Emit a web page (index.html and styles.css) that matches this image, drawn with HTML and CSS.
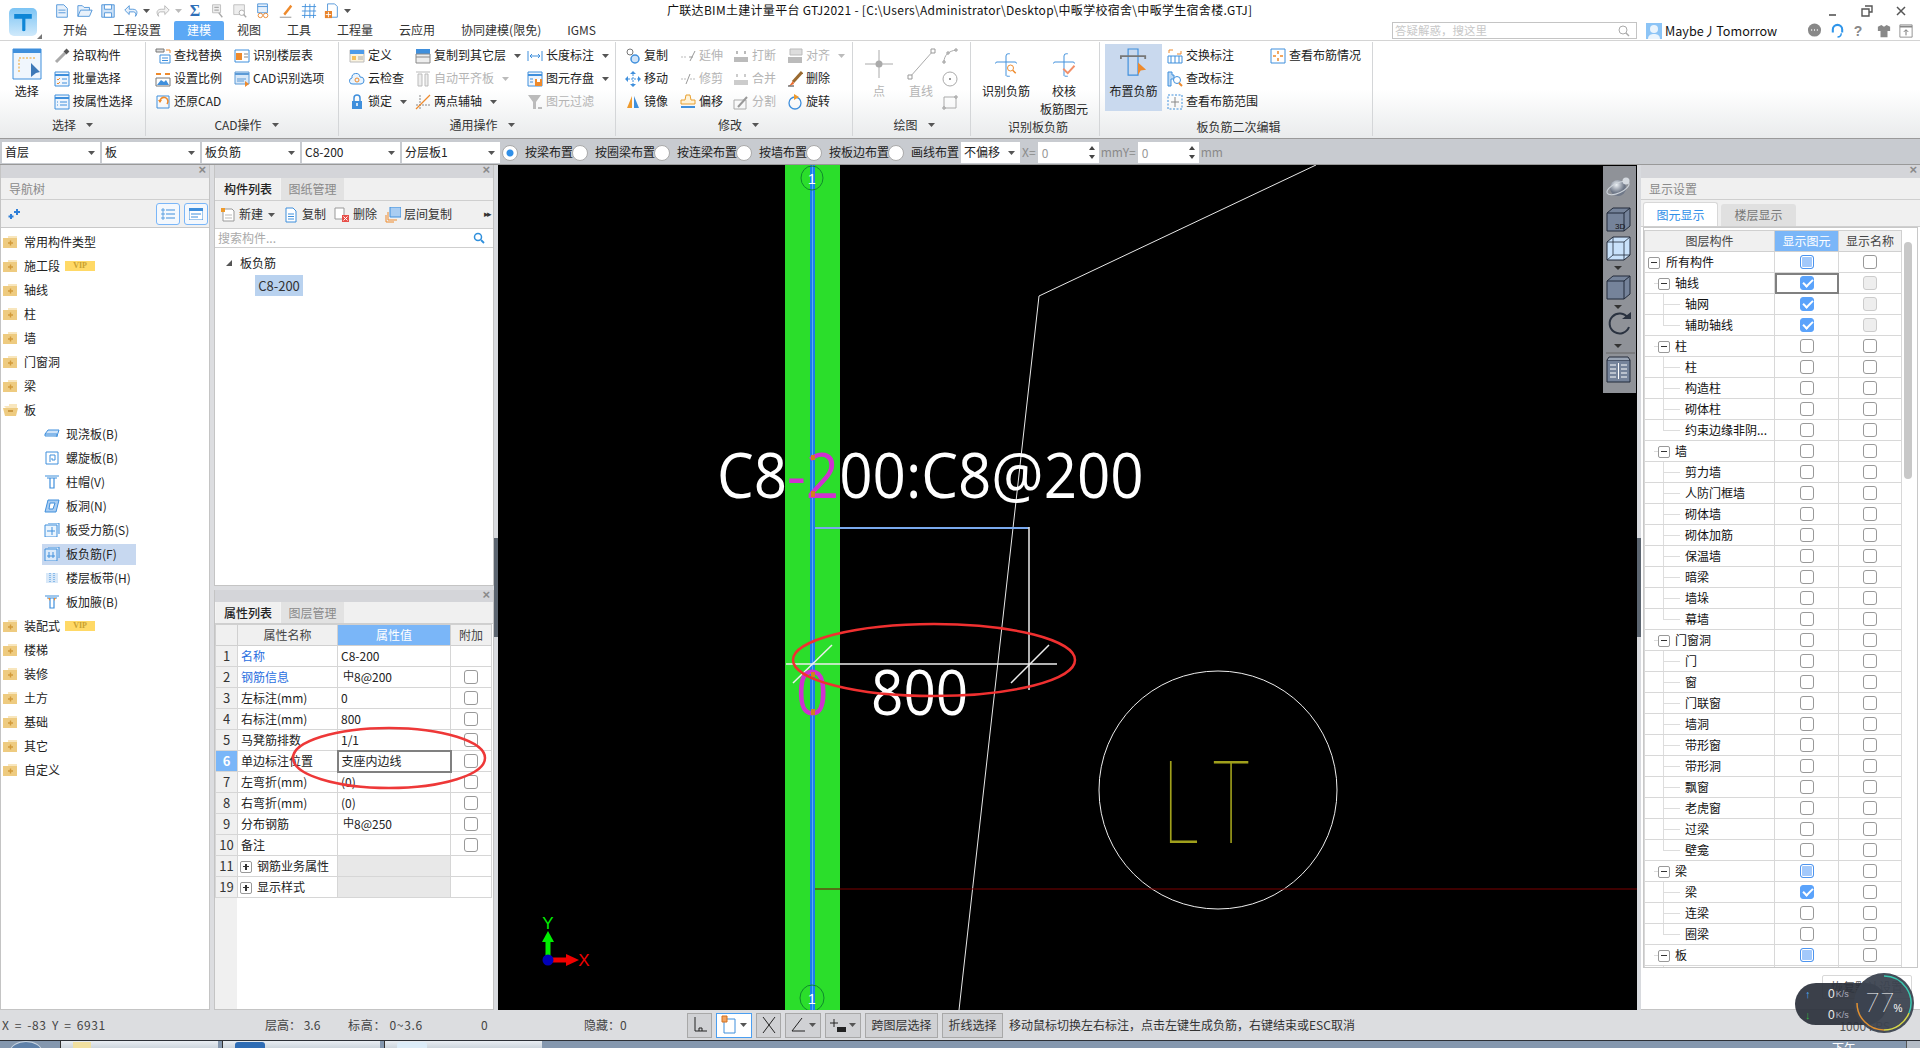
FILE: index.html
```html
<!DOCTYPE html>
<html lang="zh-CN">
<head>
<meta charset="utf-8">
<title>广联达BIM土建计量平台 GTJ2021</title>
<link rel="stylesheet" href="styles.css">
</head>
<body>
<svg class="defs" width="0" height="0">
  <symbol id="folder" viewBox="0 0 15 14"><path d="M0 3h5V1h9v12H0z" fill="#eecb80"/><path d="M5 1h9v2H5z" fill="#f8e6bd"/><path d="M7.5 5.5v5M5 8h5" stroke="#d29a3a" stroke-width="1.4"/></symbol>
  <symbol id="down" viewBox="0 0 7 4"><path d="M0 0h7L3.5 4z" fill="#555"/></symbol>
  <symbol id="ticon" viewBox="0 0 16 16"><path d="M1 1h14v14H1z" fill="#eef5fd" stroke="#3f8fdc"/><path d="M1 4h14" stroke="#3f8fdc" stroke-width="2"/></symbol>
</svg>

<header class="top">
  <div class="logo-cell">
    <div class="logo"><svg viewBox="0 0 30 30" width="24" height="24"><path d="M4 5h22v6h-8v14c0 2-4 2-4 0V11H4z" fill="#0f86d6"/></svg></div>
    <span class="logo-corner"></span>
  </div>
  <div class="top-main">
    <div class="title-row">
      <div class="quick">
        <svg class="q" viewBox="0 0 18 18"><path d="M3 2h8l4 4v10H3z" fill="#e8f1fb" stroke="#4a92d8"/><path d="M5 8h8M5 11h8" stroke="#4a92d8"/></svg>
        <svg class="q" viewBox="0 0 18 18"><path d="M1 15V3h5l2 2h6v3M1 15l3-7h13l-3 7z" fill="#e8f1fb" stroke="#4a92d8"/></svg>
        <svg class="q" viewBox="0 0 18 18"><path d="M2 2h14v14H2z" fill="#cfe3f8" stroke="#4a92d8"/><path d="M5 2h8v5H5zM5 11h8v5H5z" fill="#fff" stroke="#4a92d8"/></svg>
        <svg class="q" viewBox="0 0 18 18"><path d="M7 3L2 8l5 5v-3h5c2 0 3 2 2 5 3-4 2-8-3-8H7z" fill="#e8f1fb" stroke="#4a92d8"/></svg>
        <svg class="qd" viewBox="0 0 7 4"><use href="#down"/></svg>
        <svg class="q" viewBox="0 0 18 18"><path d="M11 3l5 5-5 5v-3H6c-2 0-3 2-2 5-3-4-2-8 3-8h4z" fill="#f2f2f2" stroke="#b5b5b5"/></svg>
        <svg class="qd off" viewBox="0 0 7 4"><path d="M0 0h7L3.5 4z" fill="#bbb"/></svg>
        <span class="sigma">Σ</span>
        <svg class="q" viewBox="0 0 18 18"><path d="M4 2h9v9H4z" fill="#eee" stroke="#bbb"/><path d="M6 5h5M6 8h5M11 11l4 5" stroke="#aaa" stroke-width="1.5"/></svg>
        <svg class="q" viewBox="0 0 18 18"><path d="M2 2h12v11H2z" fill="#eee" stroke="#bbb"/><circle cx="11" cy="11" r="3" fill="#fff" stroke="#aaa"/><path d="M13 13l3 3" stroke="#aaa" stroke-width="1.5"/></svg>
        <svg class="q" viewBox="0 0 18 18"><path d="M3 1h11v10H3z" fill="#e6f0fb" stroke="#4a92d8"/><path d="M3 4h11" stroke="#4a92d8"/><circle cx="6" cy="14" r="2.5" fill="none" stroke="#e8842c"/><circle cx="12" cy="14" r="2.5" fill="none" stroke="#e8842c"/></svg>
        <svg class="q" viewBox="0 0 18 18"><path d="M6 12L14 2l2 2-8 10z" fill="#ee8a2c"/><path d="M2 16h13" stroke="#888"/></svg>
        <svg class="q" viewBox="0 0 18 18"><path d="M1 4h16M1 9h16M1 14h16M5 1l-1 16M10 1v16M15 1l-1 16" stroke="#3f8fdc" fill="none"/></svg>
        <svg class="q" viewBox="0 0 18 18"><path d="M4 1h8l3 3v12H4z" fill="#fff" stroke="#4a92d8"/><path d="M1 9h8v8H1z" fill="#e8842c"/><path d="M5 10v6M2 13h6" stroke="#fff"/></svg>
        <svg class="qd" viewBox="0 0 7 4"><use href="#down"/></svg>
      </div>
      <div class="title">广联达BIM土建计量平台 GTJ2021 - [C:\Users\Administrator\Desktop\中畈学校宿舍\中畈学生宿舍楼.GTJ]</div>
      <div class="win">
        <svg viewBox="0 0 12 12" width="12" height="12"><path d="M2 9h7v2H2z" fill="#777"/></svg>
        <svg viewBox="0 0 12 12" width="12" height="12"><path d="M4 1h7v6H8M1 4h7v7H1z" fill="none" stroke="#555" stroke-width="1.4"/></svg>
        <svg viewBox="0 0 12 12" width="12" height="12"><path d="M2 2l8 8M10 2l-8 8" stroke="#555" stroke-width="1.5"/></svg>
      </div>
    </div>
    <div class="tab-row">
      <nav class="tabs">
        <span class="tab">开始</span><span class="tab">工程设置</span><span class="tab active">建模</span><span class="tab">视图</span><span class="tab">工具</span><span class="tab">工程量</span><span class="tab">云应用</span><span class="tab">协同建模(限免)</span><span class="tab">IGMS</span>
      </nav>
      <div class="search"><span>答疑解惑，搜这里</span><svg viewBox="0 0 12 12" width="12" height="12"><circle cx="5" cy="5" r="4" fill="none" stroke="#aaa"/><path d="M8 8l3 3" stroke="#aaa" stroke-width="1.4"/></svg></div>
      <div class="avatar"><svg viewBox="0 0 16 16" width="16" height="16"><path d="M0 0h16v16H0z" fill="#8cc4f6"/><circle cx="8" cy="6" r="4" fill="#eaf4fd"/><path d="M2 16c0-4 3-5 6-5s6 1 6 5z" fill="#eaf4fd"/></svg></div>
      <span class="user">Maybe丿Tomorrow</span>
      <div class="tools">
        <svg viewBox="0 0 16 16" width="15" height="15"><circle cx="8" cy="7.5" r="7" fill="#888"/><path d="M4.5 7.5h1M7.5 7.5h1M10.5 7.5h1" stroke="#fff" stroke-width="1.5"/></svg>
        <svg viewBox="0 0 16 16" width="15" height="15"><path d="M3 10V7a5 5 0 0 1 10 0v3" fill="none" stroke="#2f95ea" stroke-width="2.2"/><path d="M12 11c0 3-2 4-4 4" fill="none" stroke="#2f95ea" stroke-width="1.5"/></svg>
        <span class="help">?</span>
        <svg viewBox="0 0 16 16" width="14" height="14"><path d="M5 1L1 3v5h3v7h8V8h3V3l-4-2-3 2z" fill="#888"/></svg>
        <svg viewBox="0 0 16 16" width="14" height="14"><path d="M1 1h14v14H1z" fill="#fff" stroke="#888"/><path d="M1 3h14" stroke="#888" stroke-width="2"/><path d="M8 13V7M5.5 9L8 6.5 10.5 9" stroke="#666" fill="none"/></svg>
      </div>
    </div>
  </div>
</header>

<section class="ribbon">
  <div class="group g1">
    <div class="gbody">
      <div class="big b54">
        <svg class="bi" viewBox="0 0 30 32" width="30" height="32"><path d="M1 1h28v30H1z" fill="#f0f6fd" stroke="#3f8fdc"/><path d="M1 3h28" stroke="#3f8fdc" stroke-width="4"/><path d="M7 24V10h17" fill="none" stroke="#f0a020" stroke-dasharray="2 1.5"/><path d="M19 15l9 9-4 1-5 4z" fill="#3f79b8"/></svg>
        <span>选择</span>
      </div>
      <div class="col w92">
        <div class="ri"><svg class="i" viewBox="0 0 16 16"><path d="M2 14l9-9" stroke="#aaa" stroke-width="3"/><path d="M11 5l3-3" stroke="#555" stroke-width="4"/></svg>拾取构件</div>
        <div class="ri"><svg class="i" viewBox="0 0 16 16"><use href="#ticon"/><path d="M3 8l1 1 2-2M3 12l1 1 2-2" stroke="#ee8a2c" fill="none"/><path d="M8 8h5M8 12h5" stroke="#3f8fdc"/></svg>批量选择</div>
        <div class="ri"><svg class="i" viewBox="0 0 16 16"><use href="#ticon"/><path d="M6 8h7M6 11h7" stroke="#3f8fdc"/><path d="M3 8h1M3 11h1" stroke="#3f8fdc"/></svg>按属性选择</div>
      </div>
    </div>
    <div class="glabel">选择<svg class="ar" viewBox="0 0 7 4"><use href="#down"/></svg></div>
  </div>

  <div class="group g2">
    <div class="gbody">
      <div class="col w79">
        <div class="ri"><svg class="i" viewBox="0 0 16 16"><path d="M1 1h8v3H1z" fill="#ddd" stroke="#777"/><path d="M11 2h4v3" stroke="#ee8a2c" fill="none"/><path d="M5 7h10v8H5z" fill="#fff" stroke="#3f8fdc"/><path d="M7 10h6M7 12.5h6" stroke="#3f8fdc"/></svg>查找替换</div>
        <div class="ri"><svg class="i" viewBox="0 0 16 16"><path d="M1 3h5M10 3h5" stroke="#ee8a2c" stroke-width="2"/><path d="M1 7h14v8H1z" fill="#fff" stroke="#777"/><path d="M2 14l4-5 3 2 2-2 3 5z" fill="#3f8fdc"/></svg>设置比例</div>
        <div class="ri"><svg class="i" viewBox="0 0 16 16"><path d="M2 2h12v12H2z" fill="none" stroke="#3f8fdc"/><path d="M12 10a4 4 0 1 0-7-2" fill="none" stroke="#ee8a2c" stroke-width="1.6"/><path d="M3 6l2 3 2-3z" fill="#ee8a2c"/></svg>还原CAD</div>
      </div>
      <div class="col">
        <div class="ri"><svg class="i" viewBox="0 0 16 16"><path d="M1 2h14v12H1z" fill="#fff" stroke="#3f8fdc"/><path d="M2 5h6v7H2z" fill="#ee8a2c"/><path d="M10 6h4M10 9h4" stroke="#888"/></svg>识别楼层表</div>
        <div class="ri"><svg class="i" viewBox="0 0 16 16"><path d="M1 1h14v12H1z" fill="#d8e8f8" stroke="#5c9ad6"/><path d="M1 3h14" stroke="#5c9ad6" stroke-width="2"/><path d="M3 8h9M3 10h7" stroke="#5c9ad6"/><path d="M11 10l4 3-4 3z" fill="#ee8a2c"/></svg>CAD识别选项</div>
      </div>
    </div>
    <div class="glabel">CAD操作<svg class="ar" viewBox="0 0 7 4"><use href="#down"/></svg></div>
  </div>

  <div class="group g3">
    <div class="gbody">
      <div class="col w66">
        <div class="ri"><svg class="i" viewBox="0 0 16 16"><path d="M1 2h14v12H1z" fill="#fbf3df" stroke="#bbb"/><path d="M1 2h14v4H1z" fill="#4d9bea"/><path d="M3 8h4v4H3z" fill="#f4c05c"/><path d="M9 9h5M9 11h5" stroke="#aaa"/></svg>定义</div>
        <div class="ri"><svg class="i" viewBox="0 0 16 16"><path d="M4 13a3 3 0 0 1-1-6 4 4 0 0 1 8-1 3.5 3.5 0 0 1 1 7z" fill="#eaf4fd" stroke="#3f8fdc"/><circle cx="8" cy="9" r="2" fill="none" stroke="#ee8a2c"/></svg>云检查</div>
        <div class="ri"><svg class="i" viewBox="0 0 16 16"><path d="M5 7V4a3 3 0 0 1 6 0v3" fill="none" stroke="#3f8fdc" stroke-width="1.5"/><path d="M3 7h10v8H3z" fill="#3f8fdc"/><path d="M8 9v3" stroke="#fff" stroke-width="1.5"/></svg>锁定<svg class="ar" viewBox="0 0 7 4"><use href="#down"/></svg></div>
      </div>
      <div class="col w112">
        <div class="ri"><svg class="i" viewBox="0 0 16 16"><path d="M1 1h14v8H1z" fill="#3f8fdc"/><path d="M1 6h14v9H1z" fill="#eee" stroke="#888"/><path d="M1 9h14" stroke="#888"/></svg>复制到其它层<svg class="ar" viewBox="0 0 7 4"><use href="#down"/></svg></div>
        <div class="ri off"><svg class="i" viewBox="0 0 16 16"><path d="M1 1h14M3 3h4v12H3zM10 3h3v12h-3z" fill="#eee" stroke="#bbb"/></svg>自动平齐板<svg class="ar" viewBox="0 0 7 4"><path d="M0 0h7L3.5 4z" fill="#bbb"/></svg></div>
        <div class="ri"><svg class="i" viewBox="0 0 16 16"><path d="M5 1v14M1 11h14" stroke="#888" stroke-dasharray="2 1"/><path d="M1 15L15 1" stroke="#ee8a2c" stroke-width="1.2"/></svg>两点辅轴<svg class="ar" viewBox="0 0 7 4"><use href="#down"/></svg></div>
      </div>
      <div class="col">
        <div class="ri"><svg class="i" viewBox="0 0 16 16"><path d="M1 3v10M15 3v10M3 8h10M3 8l2-2M3 8l2 2M13 8l-2-2M13 8l-2 2" stroke="#3f8fdc" fill="none"/></svg>长度标注<svg class="ar" viewBox="0 0 7 4"><use href="#down"/></svg></div>
        <div class="ri"><svg class="i" viewBox="0 0 16 16"><use href="#ticon"/><path d="M8 8h7v7H8z" fill="#ee8a2c"/><path d="M10 8h3v3h-3z" fill="#fff"/><path d="M3 8h3M3 11h3" stroke="#3f8fdc"/></svg>图元存盘<svg class="ar" viewBox="0 0 7 4"><use href="#down"/></svg></div>
        <div class="ri off"><svg class="i" viewBox="0 0 16 16"><path d="M1 1h13L9 8v7H6V8z" fill="#bbb"/><path d="M11 14h4" stroke="#bbb" stroke-width="2"/></svg>图元过滤</div>
      </div>
    </div>
    <div class="glabel">通用操作<svg class="ar" viewBox="0 0 7 4"><use href="#down"/></svg></div>
  </div>

  <div class="group g4">
    <div class="gbody">
      <div class="col w55">
        <div class="ri"><svg class="i" viewBox="0 0 16 16"><circle cx="5" cy="4" r="3" fill="#fff" stroke="#777"/><circle cx="10" cy="11" r="4" fill="#cfe3f8" stroke="#3f8fdc" stroke-width="1.5"/></svg>复制</div>
        <div class="ri"><svg class="i" viewBox="0 0 16 16"><path d="M8 0l3 3H5zM8 16l3-3H5zM0 8l3 3V5zM16 8l-3 3V5z" fill="#3f8fdc"/><path d="M8 3v10M3 8h10" stroke="#3f8fdc" stroke-dasharray="2 1"/></svg>移动</div>
        <div class="ri"><svg class="i" viewBox="0 0 16 16"><path d="M7 2L2 14h5z" fill="#ee9a2c"/><path d="M9 2l5 12H9z" fill="#3f8fdc"/></svg>镜像</div>
      </div>
      <div class="col w53">
        <div class="ri off"><svg class="i" viewBox="0 0 16 16"><path d="M1 9h6" stroke="#bbb" stroke-dasharray="2 1"/><path d="M9 9h4M10 13l5-10" stroke="#999"/></svg>延伸</div>
        <div class="ri off"><svg class="i" viewBox="0 0 16 16"><path d="M1 8h5M10 8h5" stroke="#bbb" stroke-dasharray="2 1"/><path d="M6 13l4-10" stroke="#999"/></svg>修剪</div>
        <div class="ri"><svg class="i" viewBox="0 0 16 16"><path d="M6 1h4l1 5h4v4H1V6h4z" fill="#fff3d8" stroke="#e8a030"/><path d="M1 13h14" stroke="#3f8fdc" stroke-width="2"/></svg>偏移</div>
      </div>
      <div class="col w54">
        <div class="ri off"><svg class="i" viewBox="0 0 16 16"><path d="M1 9h14v5H1zM3 3h2v3H3zM11 3h2v3h-2z" fill="#bbb"/></svg>打断</div>
        <div class="ri off"><svg class="i" viewBox="0 0 16 16"><path d="M1 9h14v5H1zM3 3h2v3H3zM11 3h2v3h-2z" fill="#ccc"/></svg>合并</div>
        <div class="ri off"><svg class="i" viewBox="0 0 16 16"><path d="M1 6h12v9H1z" fill="none" stroke="#aaa"/><path d="M5 13L14 3" stroke="#999" stroke-width="2"/></svg>分割</div>
      </div>
      <div class="col">
        <div class="ri off"><svg class="i" viewBox="0 0 16 16"><path d="M3 1h12v6H3z" fill="#ddd" stroke="#bbb"/><path d="M1 9h14v6H1z" fill="#bbb"/></svg>对齐<svg class="ar" viewBox="0 0 7 4"><path d="M0 0h7L3.5 4z" fill="#bbb"/></svg></div>
        <div class="ri"><svg class="i" viewBox="0 0 16 16"><path d="M15 1L6 11" stroke="#9a6a30" stroke-width="3"/><path d="M6 10l-4 5 5-2z" fill="#ee6a2c"/><path d="M1 15h6" stroke="#333"/></svg>删除</div>
        <div class="ri"><svg class="i" viewBox="0 0 16 16"><circle cx="8" cy="9" r="6" fill="none" stroke="#3f8fdc" stroke-width="1.3"/><path d="M7 0l5 3-5 3z" fill="#ee9a2c"/></svg>旋转</div>
      </div>
    </div>
    <div class="glabel">修改<svg class="ar" viewBox="0 0 7 4"><use href="#down"/></svg></div>
  </div>

  <div class="group g5">
    <div class="gbody">
      <div class="big b42 off">
        <svg class="bi" viewBox="0 0 30 32" width="30" height="32"><path d="M15 2v28M1 16h28" stroke="#aaa"/><circle cx="15" cy="16" r="3.5" fill="#aaa"/></svg>
        <span>点</span>
      </div>
      <div class="big b42 off">
        <svg class="bi" viewBox="0 0 30 32" width="30" height="32"><path d="M4 29L27 3" stroke="#aaa"/><path d="M2 27h4v4H2zM25 1h4v4h-4z" fill="#fff" stroke="#999"/></svg>
        <span>直线</span>
      </div>
      <div class="col">
        <div class="ri"><svg class="i" viewBox="0 0 16 16"><path d="M2 14C2 7 7 3 14 2" fill="none" stroke="#aaa"/><path d="M1 13h2v2H1zM13 1h2v2h-2zM5 4h2v2H5z" fill="#fff" stroke="#999"/></svg></div>
        <div class="ri"><svg class="i" viewBox="0 0 16 16"><circle cx="8" cy="8" r="7" fill="none" stroke="#aaa"/><path d="M7 7h2v2H7z" fill="#999"/></svg></div>
        <div class="ri"><svg class="i" viewBox="0 0 16 16"><path d="M2 3h12v11H2z" fill="none" stroke="#aaa"/><path d="M13 2h2v2h-2zM1 13h2v2H1z" fill="#fff" stroke="#999"/></svg></div>
      </div>
    </div>
    <div class="glabel">绘图<svg class="ar" viewBox="0 0 7 4"><use href="#down"/></svg></div>
  </div>

  <div class="group g6">
    <div class="gbody">
      <div class="big b58">
        <svg class="bi" viewBox="0 0 30 32" width="30" height="32"><path d="M15 8V4q0-3 3-3h2M15 8v22q0 1 3 1h2M1 14q0-2 2-2h24q2 0 2 2" fill="none" stroke="#3f8fdc" stroke-width="1.3"/><circle cx="21" cy="20" r="4" fill="#fff" stroke="#ee8a2c" stroke-width="1.3"/><path d="M24 23l4 4" stroke="#ee8a2c" stroke-width="2"/></svg>
        <span>识别负筋</span>
      </div>
      <div class="big b58">
        <svg class="bi" viewBox="0 0 30 32" width="30" height="32"><path d="M15 8V4q0-3 3-3h2M15 8v22q0 1 3 1h2M1 14q0-2 2-2h24q2 0 2 2" fill="none" stroke="#3f8fdc" stroke-width="1.3"/><path d="M14 21l6 6 9-10" fill="none" stroke="#f2906a" stroke-width="2.5"/></svg>
        <span>校核<br>板筋图元</span>
      </div>
    </div>
    <div class="glabel low">识别板负筋</div>
  </div>

  <div class="group g7">
    <div class="gbody">
      <div class="big active">
        <svg class="bi" viewBox="0 0 30 32" width="30" height="32"><path d="M9 1h11v29H9z" fill="none" stroke="#3f8fdc" stroke-width="1.3"/><path d="M1 12v-3h27v3" fill="none" stroke="#777" stroke-width="2"/><path d="M20 16l9 8-6 1-3 5z" fill="#ee8a2c"/></svg>
        <span>布置负筋</span>
      </div>
      <div class="col w103">
        <div class="ri"><svg class="i" viewBox="0 0 16 16"><path d="M1 8h14v7H1z" fill="#fff" stroke="#3f8fdc"/><path d="M4 8v7M8 8v7M12 8v7" stroke="#3f8fdc"/><path d="M2 5V2h4M14 3v3h-4" stroke="#ee8a2c" fill="none"/></svg>交换标注</div>
        <div class="ri"><svg class="i" viewBox="0 0 16 16"><path d="M1 1h4v3h2v4H4v7H1z" fill="#bcd9f5" stroke="#3f8fdc"/><circle cx="10" cy="9" r="3.5" fill="#fff" stroke="#3f8fdc"/><path d="M12 12l3 3" stroke="#ee8a2c" stroke-width="2"/></svg>查改标注</div>
        <div class="ri"><svg class="i" viewBox="0 0 16 16"><path d="M1 1h14v14H1z" fill="none" stroke="#3f8fdc" stroke-dasharray="2 1.5"/><path d="M8 3v10M4 8h8" stroke="#888"/></svg>查看布筋范围</div>
      </div>
      <div class="col">
        <div class="ri"><svg class="i" viewBox="0 0 16 16"><path d="M1 1h14v14H1z" fill="#fff" stroke="#3f8fdc"/><path d="M8 3v3M8 10v3M3 8h3M10 8h3" stroke="#ee8a2c" stroke-width="1.5"/></svg>查看布筋情况</div>
      </div>
    </div>
    <div class="glabel low">板负筋二次编辑</div>
  </div>
</section>

<section class="optbar">
  <div class="sel w98">首层<svg class="ar" viewBox="0 0 7 4"><use href="#down"/></svg></div>
  <div class="sel w98">板<svg class="ar" viewBox="0 0 7 4"><use href="#down"/></svg></div>
  <div class="sel w98">板负筋<svg class="ar" viewBox="0 0 7 4"><use href="#down"/></svg></div>
  <div class="sel w98">C8-200<svg class="ar" viewBox="0 0 7 4"><use href="#down"/></svg></div>
  <div class="sel w98">分层板1<svg class="ar" viewBox="0 0 7 4"><use href="#down"/></svg></div>
  <label class="radio on first">按梁布置</label>
  <label class="radio">按圈梁布置</label>
  <label class="radio">按连梁布置</label>
  <label class="radio">按墙布置</label>
  <label class="radio">按板边布置</label>
  <label class="radio">画线布置</label>
  <div class="sel w59">不偏移<svg class="ar" viewBox="0 0 7 4"><use href="#down"/></svg></div>
  <span class="dim">X=</span>
  <div class="spin">0<span class="spin-a"><i></i><i></i></span></div>
  <span class="dim">mmY=</span>
  <div class="spin">0<span class="spin-a"><i></i><i></i></span></div>
  <span class="dim">mm</span>
</section>

<main class="main">
  <aside class="panel nav">
    <div class="strip"><span class="x">×</span></div>
    <div class="ptitle">导航树</div>
    <div class="navtools">
      <svg class="spark" viewBox="0 0 14 12" width="14" height="12"><path d="M3 6v5M0.5 8.5h5M9 1v6M6 4h6" stroke="#2f7fd8" stroke-width="2"/></svg>
      <span class="nbtn"><svg viewBox="0 0 14 12" width="14" height="12"><path d="M1 1h2v2H1zM1 5h2v2H1zM1 9h2v2H1z" fill="none" stroke="#3f8fdc" stroke-width=".8"/><path d="M5 2h9M5 6h9M5 10h9" stroke="#3f8fdc"/></svg></span>
      <span class="nbtn"><svg viewBox="0 0 14 12" width="14" height="12"><path d="M0 0h14v12H0z" fill="#fff" stroke="#3f8fdc"/><path d="M0 0h14v3H0z" fill="#3f8fdc"/><path d="M2 6h10M2 9h7" stroke="#3f8fdc"/></svg></span>
    </div>
    <ul class="tree">
      <li><svg class="fd"><use href="#folder"/></svg>常用构件类型</li>
      <li><svg class="fd"><use href="#folder"/></svg>施工段<span class="vip">VIP</span></li>
      <li><svg class="fd"><use href="#folder"/></svg>轴线</li>
      <li><svg class="fd"><use href="#folder"/></svg>柱</li>
      <li><svg class="fd"><use href="#folder"/></svg>墙</li>
      <li><svg class="fd"><use href="#folder"/></svg>门窗洞</li>
      <li><svg class="fd"><use href="#folder"/></svg>梁</li>
      <li><svg class="fd" viewBox="0 0 15 14"><path d="M1 3h5V1h8v4H3z" fill="#f8e6bd"/><path d="M0 5h15l-2 8H2z" fill="#eecb80"/><path d="M5 8h5" stroke="#c08a30" stroke-width="1.5"/></svg>板</li>
      <li class="sub"><svg class="ci" viewBox="0 0 16 14"><path d="M1 7l3-4h11l-2 6H1zM1 7h12v3" fill="#cfe3f8" stroke="#3f8fdc"/></svg>现浇板(B)</li>
      <li class="sub"><svg class="ci" viewBox="0 0 16 14"><path d="M2 1h12v12H2z" fill="none" stroke="#3f8fdc"/><path d="M6 11V4h5v5H8V7" fill="none" stroke="#3f8fdc"/></svg>螺旋板(B)</li>
      <li class="sub"><svg class="ci" viewBox="0 0 16 14"><path d="M1 1h14M3 3h10M6 3v10h4V3" fill="none" stroke="#3f8fdc" stroke-width="1.2"/></svg>柱帽(V)</li>
      <li class="sub"><svg class="ci" viewBox="0 0 16 14"><path d="M4 1h11l-3 12H1z" fill="#a9cdf2" stroke="#3f8fdc"/><path d="M6 4h5l-2 6H5z" fill="#fff" stroke="#3f8fdc"/></svg>板洞(N)</li>
      <li class="sub"><svg class="ci" viewBox="0 0 16 14"><path d="M1 2h12v12H1zM4 0h11v11" fill="#eaf4fd" stroke="#3f8fdc"/><path d="M3 8h8M8 4v8" stroke="#3f8fdc"/></svg>板受力筋(S)</li>
      <li class="sub sel-row"><svg class="ci" viewBox="0 0 16 14"><path d="M1 2h12v12H1zM4 0h11v11" fill="#dbeafa" stroke="#3f8fdc"/><path d="M3 9h8M5 5v6M9 5v6" stroke="#3f8fdc"/></svg>板负筋(F)</li>
      <li class="sub"><svg class="ci" viewBox="0 0 16 14"><path d="M2 2h12v10H2z" fill="#d8e8f8"/><path d="M6 2v10M10 2v10" stroke="#3f8fdc" stroke-dasharray="1 1"/></svg>楼层板带(H)</li>
      <li class="sub"><svg class="ci" viewBox="0 0 16 14"><path d="M1 1h14M3 3h10M6 3v10h4V3" fill="none" stroke="#3f8fdc" stroke-width="1.2"/><path d="M4 3l2 3V3zM12 3l-2 3V3z" fill="#ee8a2c"/></svg>板加腋(B)</li>
      <li><svg class="fd"><use href="#folder"/></svg>装配式<span class="vip">VIP</span></li>
      <li><svg class="fd"><use href="#folder"/></svg>楼梯</li>
      <li><svg class="fd"><use href="#folder"/></svg>装修</li>
      <li><svg class="fd"><use href="#folder"/></svg>土方</li>
      <li><svg class="fd"><use href="#folder"/></svg>基础</li>
      <li><svg class="fd"><use href="#folder"/></svg>其它</li>
      <li><svg class="fd"><use href="#folder"/></svg>自定义</li>
    </ul>
  </aside>

  <div class="mid">
    <section class="panel comp">
      <div class="strip"><span class="x">×</span></div>
      <div class="ptabs"><span class="ptab on">构件列表</span><span class="ptab">图纸管理</span></div>
      <div class="ctools">
        <span class="ct"><svg class="i" viewBox="0 0 16 16"><path d="M3 2h9l2 2v10H3z" fill="#fff" stroke="#999"/><path d="M1 1h4v4H1z" fill="#ee9a2c"/><path d="M5 8h7M5 11h7" stroke="#bbb"/></svg>新建<svg class="ar" viewBox="0 0 7 4"><use href="#down"/></svg></span>
        <span class="ct"><svg class="i" viewBox="0 0 16 16"><path d="M3 1h7l3 3v11H3z" fill="#fff" stroke="#3f8fdc"/><path d="M5 7h6M5 9.5h6M5 12h6" stroke="#3f8fdc"/></svg>复制</span>
        <span class="ct"><svg class="i" viewBox="0 0 16 16"><path d="M1 1h9v11H1z" fill="#fff" stroke="#999"/><path d="M8 8h7v7H8z" fill="#e8504a"/><path d="M9.5 9.5l4 4M13.5 9.5l-4 4" stroke="#fff"/></svg>删除</span>
        <span class="ct"><svg class="i" viewBox="0 0 16 16"><path d="M5 0h11v10H5z" fill="#a9cdf2" stroke="#3f8fdc"/><path d="M3 5v8h9M1 8v7h8" fill="none" stroke="#ee8a2c"/></svg>层间复制</span>
        <span class="more">▸▸</span>
      </div>
      <div class="csearch"><span>搜索构件...</span><svg viewBox="0 0 12 12" width="12" height="12"><circle cx="5" cy="5" r="3.5" fill="none" stroke="#2f8fdc" stroke-width="1.5"/><path d="M8 8l3 3" stroke="#2f8fdc" stroke-width="1.8"/></svg></div>
      <div class="ctree">
        <div class="cnode"><i class="tri"></i>板负筋</div>
        <div class="cleaf">C8-200</div>
      </div>
    </section>

    <section class="panel props">
      <div class="strip"><span class="x">×</span></div>
      <div class="ptabs"><span class="ptab on">属性列表</span><span class="ptab">图层管理</span></div>
      <div class="ptable-wrap">
        <table class="ptable">
          <colgroup><col class="c-no"><col class="c-name"><col class="c-val"><col class="c-add"></colgroup>
          <thead><tr><th></th><th>属性名称</th><th class="hl">属性值</th><th>附加</th></tr></thead>
          <tbody>
            <tr><td class="no">1</td><td class="link">名称</td><td>C8-200</td><td></td></tr>
            <tr><td class="no">2</td><td class="link">钢筋信息</td><td><small>中</small>8@200</td><td class="ck"><i class="cb"></i></td></tr>
            <tr><td class="no">3</td><td>左标注(mm)</td><td>0</td><td class="ck"><i class="cb"></i></td></tr>
            <tr><td class="no">4</td><td>右标注(mm)</td><td>800</td><td class="ck"><i class="cb"></i></td></tr>
            <tr><td class="no">5</td><td>马凳筋排数</td><td>1/1</td><td class="ck"><i class="cb"></i></td></tr>
            <tr><td class="no act">6</td><td>单边标注位置</td><td class="edit">支座内边线</td><td class="ck"><i class="cb"></i></td></tr>
            <tr><td class="no">7</td><td>左弯折(mm)</td><td>(0)</td><td class="ck"><i class="cb"></i></td></tr>
            <tr><td class="no">8</td><td>右弯折(mm)</td><td>(0)</td><td class="ck"><i class="cb"></i></td></tr>
            <tr><td class="no">9</td><td>分布钢筋</td><td><small>中</small>8@250</td><td class="ck"><i class="cb"></i></td></tr>
            <tr><td class="no">10</td><td>备注</td><td></td><td class="ck"><i class="cb"></i></td></tr>
            <tr><td class="no">11</td><td><i class="plus"></i>钢筋业务属性</td><td class="grey"></td><td></td></tr>
            <tr><td class="no">19</td><td><i class="plus"></i>显示样式</td><td class="grey"></td><td></td></tr>
          </tbody>
        </table>
        <svg class="mark" viewBox="0 0 200 66" width="200" height="66"><ellipse cx="100" cy="33" rx="96" ry="30" fill="none" stroke="#ee3838" stroke-width="2.5"/></svg>
      </div>
    </section>
  </div>

  <div class="split"></div>

  <section class="canvas">
    <svg class="cad" viewBox="498 165 1139 845" width="1139" height="845">
      <rect x="785" y="165" width="55" height="845" fill="#2bde2b"/>
      <path d="M959 1010L1039 296L1316 165" fill="none" stroke="#e8e8e8"/>
      <rect x="810" y="165" width="5" height="845" fill="#1a7fe8"/>
      <rect x="812" y="165" width="1" height="845" fill="#58a8f8"/>
      <ellipse cx="812" cy="178" rx="11" ry="12" fill="none" stroke="#0e8a2c"/>
      <text class="axis-no" x="812" y="184">1</text>
      <ellipse cx="812" cy="998" rx="12" ry="13" fill="none" stroke="#0e8a2c"/>
      <text class="axis-no" x="812" y="1004">1</text>
      <text class="big-t" transform="translate(717 498) scale(.926 1)">C8<tspan fill="#d030d0">-2</tspan>00:C8@200</text>
      <rect x="811" y="455" width="4" height="5" fill="#d08020"/><rect x="811" y="491" width="4" height="6" fill="#d08020"/>
      <path d="M815 528H1029" stroke="#7aa9ee" stroke-width="2"/>
      <path d="M1029 527V690" stroke="#ddd" stroke-width="1.6"/>
      <path d="M786 664H1057" stroke="#eee" stroke-width="1.5"/>
      <path d="M793 683L832 645M1011 683L1049 645" stroke="#eee" stroke-width="1.5"/>
      <text class="big-t" transform="translate(871 715) scale(.9 1)">800</text>
      <text class="big-t mag" transform="translate(796 715) scale(.9 1)">0</text>
      <rect x="811" y="672" width="4" height="5" fill="#d08020"/><rect x="811" y="709" width="4" height="6" fill="#d08020"/>
      <ellipse cx="934" cy="660" rx="141" ry="36" fill="none" stroke="#f03030" stroke-width="2.5"/>
      <circle cx="1218" cy="790" r="119" fill="none" stroke="#eee"/>
      <text class="lt" transform="translate(1162 843) scale(.62 1)">LT</text>
      <path d="M815 889H1637" stroke="#7a0000"/>
      <path d="M548 960V940" stroke="#00ee00" stroke-width="5"/><path d="M548 931l6 11h-12z" fill="#00ee00"/>
      <path d="M548 960H568" stroke="#f00000" stroke-width="5"/><path d="M579 960l-13-6v12z" fill="#f00000"/>
      <circle cx="548" cy="960" r="5.5" fill="#0000b8"/>
      <text class="ax g" x="548" y="929">Y</text><text class="ax r" x="584" y="966">X</text>
    </svg>
    <div class="viewbar">
      <svg viewBox="0 0 33 227" width="33" height="227">
        <defs><radialGradient id="sph" cx=".4" cy=".3"><stop offset="0" stop-color="#eef2f6"/><stop offset="1" stop-color="#6f7888"/></radialGradient></defs>
        <circle cx="15" cy="22" r="8" fill="url(#sph)"/><ellipse cx="15" cy="22" rx="12" ry="5" fill="none" stroke="#cfd5dc" transform="rotate(-25 15 22)"/><circle cx="23" cy="15" r="3.5" fill="#d5dae0"/>
        <path d="M4 47l6-5h17v18l-6 5H4z" fill="#75839a" stroke="#222b3a"/><path d="M4 47h17v18M21 47l6-5" fill="none" stroke="#222b3a"/><text class="vb3" x="12" y="63">3D</text>
        <path d="M4 76l6-5h17v18l-6 5H4z" fill="#c9e2fb" stroke="#222b3a"/><path d="M4 76h17v18M21 76l6-5M10 71v18h17M10 89l-6 5" fill="none" stroke="#222b3a" stroke-width=".8"/>
        <path d="M11 100h8l-4 4z" fill="#333"/>
        <path d="M4 115l6-5h17v18l-6 5H4z" fill="#75839a" stroke="#222b3a"/><path d="M4 115h17v18M21 115l6-5" fill="none" stroke="#222b3a"/>
        <path d="M11 139h8l-4 4z" fill="#333"/>
        <path d="M25 152a10 10 0 1 0 1 9" fill="none" stroke="#2a3240" stroke-width="2"/><path d="M19 153h9v-7z" fill="#2a3240"/>
        <path d="M11 178h8l-4 4z" fill="#333"/><path d="M3 187h29" stroke="#666"/>
        <path d="M4 194h23v22H4z" fill="#75839a" stroke="#222b3a"/><path d="M4 194l2-3h19l2 3" fill="#9aa5b5" stroke="#222b3a"/><path d="M7 199h6M7 203h6M7 207h6M7 211h6M18 199h6M18 203h6M18 207h6M18 211h6M15.5 197v16" stroke="#fff"/>
      </svg>
    </div>
  </section>

  <div class="split"></div>

  <aside class="panel right">
    <div class="strip"><span class="x">×</span></div>
    <div class="ptitle">显示设置</div>
    <div class="rtabs"><span class="rtab on">图元显示</span><span class="rtab">楼层显示</span></div>
    <div class="rbox">
      <table class="rtable">
        <colgroup><col class="r-name"><col class="r-a"><col class="r-b"></colgroup>
        <thead><tr><th>图层构件</th><th class="hl">显示图元</th><th>显示名称</th></tr></thead>
        <tbody>
          <tr><td class="n l0"><i class="mb"></i>所有构件</td><td><i class="cb pt"></i></td><td><i class="cb"></i></td></tr>
          <tr><td class="n l1"><i class="mb"></i>轴线</td><td class="cur"><i class="cb ok"></i></td><td><i class="cb dis"></i></td></tr>
          <tr><td class="n l2">轴网</td><td><i class="cb ok"></i></td><td><i class="cb dis"></i></td></tr>
          <tr><td class="n l2 e">辅助轴线</td><td><i class="cb ok"></i></td><td><i class="cb dis"></i></td></tr>
          <tr><td class="n l1"><i class="mb"></i>柱</td><td><i class="cb"></i></td><td><i class="cb"></i></td></tr>
          <tr><td class="n l2">柱</td><td><i class="cb"></i></td><td><i class="cb"></i></td></tr>
          <tr><td class="n l2">构造柱</td><td><i class="cb"></i></td><td><i class="cb"></i></td></tr>
          <tr><td class="n l2">砌体柱</td><td><i class="cb"></i></td><td><i class="cb"></i></td></tr>
          <tr><td class="n l2 e">约束边缘非阴...</td><td><i class="cb"></i></td><td><i class="cb"></i></td></tr>
          <tr><td class="n l1"><i class="mb"></i>墙</td><td><i class="cb"></i></td><td><i class="cb"></i></td></tr>
          <tr><td class="n l2">剪力墙</td><td><i class="cb"></i></td><td><i class="cb"></i></td></tr>
          <tr><td class="n l2">人防门框墙</td><td><i class="cb"></i></td><td><i class="cb"></i></td></tr>
          <tr><td class="n l2">砌体墙</td><td><i class="cb"></i></td><td><i class="cb"></i></td></tr>
          <tr><td class="n l2">砌体加筋</td><td><i class="cb"></i></td><td><i class="cb"></i></td></tr>
          <tr><td class="n l2">保温墙</td><td><i class="cb"></i></td><td><i class="cb"></i></td></tr>
          <tr><td class="n l2">暗梁</td><td><i class="cb"></i></td><td><i class="cb"></i></td></tr>
          <tr><td class="n l2">墙垛</td><td><i class="cb"></i></td><td><i class="cb"></i></td></tr>
          <tr><td class="n l2 e">幕墙</td><td><i class="cb"></i></td><td><i class="cb"></i></td></tr>
          <tr><td class="n l1"><i class="mb"></i>门窗洞</td><td><i class="cb"></i></td><td><i class="cb"></i></td></tr>
          <tr><td class="n l2">门</td><td><i class="cb"></i></td><td><i class="cb"></i></td></tr>
          <tr><td class="n l2">窗</td><td><i class="cb"></i></td><td><i class="cb"></i></td></tr>
          <tr><td class="n l2">门联窗</td><td><i class="cb"></i></td><td><i class="cb"></i></td></tr>
          <tr><td class="n l2">墙洞</td><td><i class="cb"></i></td><td><i class="cb"></i></td></tr>
          <tr><td class="n l2">带形窗</td><td><i class="cb"></i></td><td><i class="cb"></i></td></tr>
          <tr><td class="n l2">带形洞</td><td><i class="cb"></i></td><td><i class="cb"></i></td></tr>
          <tr><td class="n l2">飘窗</td><td><i class="cb"></i></td><td><i class="cb"></i></td></tr>
          <tr><td class="n l2">老虎窗</td><td><i class="cb"></i></td><td><i class="cb"></i></td></tr>
          <tr><td class="n l2">过梁</td><td><i class="cb"></i></td><td><i class="cb"></i></td></tr>
          <tr><td class="n l2 e">壁龛</td><td><i class="cb"></i></td><td><i class="cb"></i></td></tr>
          <tr><td class="n l1"><i class="mb"></i>梁</td><td><i class="cb pt"></i></td><td><i class="cb"></i></td></tr>
          <tr><td class="n l2">梁</td><td><i class="cb ok"></i></td><td><i class="cb"></i></td></tr>
          <tr><td class="n l2">连梁</td><td><i class="cb"></i></td><td><i class="cb"></i></td></tr>
          <tr><td class="n l2 e">圈梁</td><td><i class="cb"></i></td><td><i class="cb"></i></td></tr>
          <tr><td class="n l1"><i class="mb"></i>板</td><td><i class="cb pt"></i></td><td><i class="cb"></i></td></tr>
          <tr><td class="n l2"></td><td><i class="cb pt"></i></td><td><i class="cb"></i></td></tr>
        </tbody>
      </table>
      <span class="rscroll"></span>
    </div>
    <div class="rfoot"><span class="restore">恢复默认设置</span></div>
  </aside>
</main>

<footer class="status">
  <span class="st s1">X = -83 Y = 6931</span>
  <span class="st s2">层高： 3.6</span>
  <span class="st s3">标高： 0~3.6</span>
  <span class="st s4">0</span>
  <span class="st s5">隐藏：0</span>
  <span class="sb w25"><svg viewBox="0 0 16 18" width="16" height="18"><path d="M3 1v14h12M7 15v-3h3v3" fill="none" stroke="#222"/></svg></span>
  <span class="sb w36 on"><svg viewBox="0 0 16 20" width="16" height="20"><path d="M3 4h11v14H3z" fill="#fff" stroke="#3f8fdc"/><path d="M1 1h5v6H1z" fill="#f4a460" stroke="#d07020"/></svg><svg class="ar" viewBox="0 0 7 4"><use href="#down"/></svg></span>
  <span class="sb w25"><svg viewBox="0 0 16 18" width="16" height="18"><path d="M2 1l12 16M14 1L2 17" stroke="#222"/></svg></span>
  <span class="sb w36"><svg viewBox="0 0 16 18" width="16" height="18"><path d="M12 2L2 15h13" fill="none" stroke="#222"/></svg><svg class="ar" viewBox="0 0 7 4"><use href="#down"/></svg></span>
  <span class="sb w36"><svg viewBox="0 0 16 18" width="16" height="18"><path d="M4 3v8M0 7h8" stroke="#222"/><path d="M7 11h9v5H7z" fill="#222"/></svg><svg class="ar" viewBox="0 0 7 4"><use href="#down"/></svg></span>
  <span class="sb txt w73">跨图层选择</span>
  <span class="sb txt w61">折线选择</span>
  <span class="msg">移动鼠标切换左右标注，点击左键生成负筋，右键结束或ESC取消</span>
  <span class="fps">1000 FPS</span>
</footer>

<div class="taskbar">
  <span class="start"><i></i></span>
  <span class="tk"><i class="tk-a"></i></span>
  <span class="tk"><i class="tk-b"></i></span>
  <span class="tk"><i class="tk-c"></i></span>
  <span class="clock">下午</span>
  <span class="showd"></span>
</div>

<div class="net">
  <div class="pill">
    <div class="nr"><b class="up">↑</b><span>0</span><small>K/s</small></div>
    <div class="nr"><b class="dn">↓</b><span>0</span><small>K/s</small></div>
  </div>
  <div class="gauge">
    <svg viewBox="0 0 60 60" width="60" height="60">
      <circle cx="30" cy="30" r="30" fill="#3c4350" fill-opacity=".95"/>
      <path d="M30 3a27 27 0 0 1 25 37" fill="none" stroke="#39c8b0" stroke-width="1.5"/>
      <path d="M55 40a27 27 0 0 1-25 17" fill="none" stroke="#d8d848" stroke-width="1.5"/>
      <path d="M30 57A27 27 0 0 1 3 30" fill="none" stroke="#e09030" stroke-width="1.5"/>
      <text class="g-n" x="26" y="39">77</text><text class="g-p" x="44" y="39">%</text>
    </svg>
  </div>
</div>
</body>
</html>
```

FILE: styles.css
```css
* { box-sizing: border-box; }
html, body { margin: 0; padding: 0; }
body {
  width: 1920px; height: 1048px; overflow: hidden; position: relative;
  display: flex; flex-direction: column;
  font: 12px/1.2 "Noto Sans CJK SC", "Microsoft YaHei", sans-serif;
  color: #222; background: #dcdde0;
}
.defs { position: absolute; }
i { font-style: normal; }

/* top */
.top { height: 41px; display: flex; background: #fff; border-bottom: 1px solid #d4d4d4; }
.logo-cell { width: 50px; position: relative; }
.logo { position: absolute; left: 9px; top: 8px; width: 28px; height: 28px; border-radius: 5px; background: linear-gradient(#7cc4f4, #cfe9fb); display: flex; align-items: center; justify-content: center; }
.logo-corner { position: absolute; right: 8px; bottom: 1px; border-style: solid; border-width: 0 0 5px 5px; border-color: transparent transparent #777 transparent; }
.top-main { flex: 1; display: flex; flex-direction: column; }
.title-row { height: 21px; display: flex; align-items: center; }
.quick { width: 617px; display: flex; align-items: center; padding-left: 4px; gap: 6px; }
.q { width: 16px; height: 16px; margin-right: 1px; }
.qd { width: 7px; height: 4px; margin-left: -3px; margin-right: -1px; }
.sigma { font: bold 16px "Liberation Serif", serif; color: #2f6fb8; width: 16px; text-align: center; }
.title { color: #111; white-space: nowrap; letter-spacing: .3px; }
.win { margin-left: auto; display: flex; gap: 22px; padding-right: 13px; }
.tab-row { height: 19px; display: flex; align-items: center; }
.tabs { width: 1342px; display: flex; height: 100%; }
.tab { padding: 0 13px; line-height: 18px; color: #333; white-space: nowrap; }
.tab.active { background: #5ba8f5; color: #fff; border-radius: 2px 2px 0 0; }
.search { width: 245px; height: 17px; border: 1px solid #c4c4c4; display: flex; align-items: center; justify-content: space-between; padding: 0 6px 0 2px; color: #c8c8c8; font-size: 11.5px; }
.avatar { margin-left: 9px; height: 16px; }
.user { margin-left: 3px; width: 142px; font: 12.6px "Noto Sans CJK SC", sans-serif; color: #111; white-space: nowrap; }
.tools { display: flex; align-items: center; gap: 8px; }
.help { font: bold 14px "Liberation Sans", sans-serif; color: #888; width: 14px; margin: 0 4px 0 -2px; text-align: center; }

/* ribbon */
.ribbon { height: 97px; display: flex; background: linear-gradient(#fff 50%, #e9ebec); }
.group { display: flex; flex-direction: column; height: 94px; border-right: 1px solid #d4d6d8; margin-top: 1px; }
.gbody { height: 74px; display: flex; padding-top: 2px; }
.glabel { text-align: center; line-height: 18px; color: #333; display: flex; align-items: center; justify-content: center; gap: 5px; }
.glabel.low { padding-top: 3px; }
.g1 { width: 146px; }
.g2 { width: 193px; padding-left: 9px; }
.g3 { width: 277px; padding-left: 10px; }
.g4 { width: 237px; padding-left: 9px; }
.g5 { width: 118px; padding-left: 5px; }
.g6 { width: 129px; padding-left: 6px; }
.g7 { width: 273px; padding-left: 5px; }
.col { display: flex; flex-direction: column; }
.w92 { width: 92px; } .w79 { width: 79px; } .w66 { width: 66px; } .w112 { width: 112px; }
.w55 { width: 55px; } .w53 { width: 53px; } .w54 { width: 54px; } .w103 { width: 103px; }
.ri { height: 23px; display: flex; align-items: center; gap: 3px; white-space: nowrap; color: #222; }
.off, .off span { color: #b4b4b4; }
.i { width: 16px; height: 16px; flex: none; }
.ar { width: 7px; height: 4px; flex: none; margin-left: 5px; }
.big { display: flex; flex-direction: column; align-items: center; text-align: center; height: 68px; padding-top: 4px; white-space: nowrap; }
.big span { margin-top: 2px; line-height: 18px; }
.bi { flex: none; }
.b54 { width: 54px; } .b42 { width: 42px; } .b58 { width: 58px; }
.b58 .bi { width: 26px; height: 24px; margin: 5px 0 3px; }
.big.active { width: 57px; background: #c9d9ee; margin-right: 5px; height: 67px; }
.big.active .bi { width: 27px; height: 29px; margin: 0 0 3px; }

/* option bar */
.optbar { height: 27px; background: #c8cbd0; border-top: 1px solid #9a9a9a; border-bottom: 1px solid #999; display: flex; align-items: center; padding: 2px 0 0 2px; gap: 2px; white-space: nowrap; }
.sel { height: 21px; background: #fff; display: flex; align-items: center; justify-content: space-between; padding: 0 5px 0 3px; color: #222; }
.w98 { width: 98px; } .w59 { width: 59px; }
.sel .ar { margin: 0; }
.radio { display: flex; align-items: center; gap: 7px; color: #222; margin-left: -3px; }
.radio.first { margin-left: 0; }
.radio::before { content: ""; width: 14px; height: 14px; border-radius: 50%; background: #fff; border: 1px solid #aaa; flex: none; }
.radio.on::before { background: radial-gradient(#2f8fe8 3px, #fff 4px); }
.dim { color: #8a8a8a; }
.spin { width: 61px; height: 21px; background: #fff; padding: 0 4px; line-height: 21px; color: #999; display: flex; justify-content: space-between; align-items: center; }
.spin-a { display: flex; flex-direction: column; gap: 5px; }
.spin-a i { border-style: solid; border-width: 0 3px 4px; border-color: transparent transparent #444; }
.spin-a i + i { border-width: 4px 3px 0; border-color: #444 transparent transparent; }

/* main */
.main { height: 845px; display: flex; }
.panel { background: #fff; display: flex; flex-direction: column; border: 1px solid #c4c4c4; border-top: 0; }
.strip { height: 13px; background: #d4d5d9; position: relative; flex: none; }
.x { position: absolute; right: 3px; top: -2px; font: bold 13px/14px "Liberation Sans", sans-serif; color: #8a8a8a; }
.ptitle { height: 22px; background: #f0f0f0; color: #8a8a8a; font-size: 12px; line-height: 21px; padding-left: 8px; border-bottom: 1px solid #cfcfcf; flex: none; }
.nav { width: 210px; }
.navtools { height: 28px; background: #f0f0f0; border-bottom: 1px solid #c8c8c8; display: flex; align-items: center; padding: 0 1px 0 7px; flex: none; }
.spark { margin-right: auto; }
.nbtn { width: 24px; height: 22px; border: 1px solid #7ab6f8; border-radius: 3px; margin-left: 4px; display: flex; align-items: center; justify-content: center; background: #f4f8fd; }
.tree { list-style: none; margin: 0; padding: 2px 0 0 2px; }
.tree li { height: 24px; display: flex; align-items: center; gap: 6px; white-space: nowrap; }
.fd { width: 15px; height: 14px; flex: none; }
.tree .sub { padding-left: 41px; width: 135px; }
.ci { width: 16px; height: 14px; flex: none; }
.sel-row { background: linear-gradient(transparent 2px, #c7d8f0 2px, #c7d8f0 23px, transparent 23px); background-position: 39px 0; background-repeat: no-repeat; background-size: 94px 24px; }
.vip { width: 30px; height: 10px; background: #ffd966; color: #c9a030; font: bold 8px/10px "Liberation Serif", serif; text-align: center; margin-left: -1px; }

.mid { width: 280px; margin-left: 4px; display: flex; flex-direction: column; gap: 4px; }
.comp { height: 421px; flex: none; }
.props { flex: 1; min-height: 0; }
.props .strip { height: 12px; }
.props .ptabs { height: 22px; }
.ptabs { height: 23px; background: #f0f0f0; display: flex; border-bottom: 1px solid #cfcfcf; flex: none; }
.ptab { width: 64px; text-align: center; line-height: 22px; color: #8a8a8a; background: #e2e2e2; border-left: 1px solid #f4f4f4; }
.ptab.on { background: #f0f0f0; color: #222; font-weight: 500; width: 65px; }
.ctools { height: 28px; background: #f0f0f0; display: flex; align-items: center; padding-left: 5px; border-bottom: 1px solid #cfcfcf; flex: none; }
.ct { display: flex; align-items: center; gap: 3px; margin-right: 8px; color: #333; white-space: nowrap; }
.ct .ar { margin-left: 2px; }
.more { margin-left: auto; font-size: 9px; color: #333; padding-right: 3px; letter-spacing: -2px; }
.csearch { height: 19px; display: flex; align-items: center; justify-content: space-between; padding: 0 8px 0 3px; color: #aaa; border-bottom: 1px solid #cfcfcf; flex: none; }
.ctree { padding-top: 3px; }
.cnode { height: 24px; display: flex; align-items: center; padding-left: 11px; gap: 8px; }
.tri { width: 0; height: 0; border-style: solid; border-width: 0 0 6px 6px; border-color: transparent transparent #555 transparent; }
.cleaf { margin-left: 40px; width: 48px; height: 21px; background: #b9d2ef; text-align: center; line-height: 21px; font-size: 13px; color: #333; }

.ptable-wrap { flex: 1; position: relative; background: linear-gradient(90deg, #f0f0f0 22px, #fff 22px); }
.ptable { width: 276px; border-collapse: collapse; table-layout: fixed; }
.c-no { width: 22px; } .c-name { width: 100px; } .c-val { width: 113px; } .c-add { width: 41px; }
.ptable th { height: 21px; background: #f0f0f0; border: 1px solid #d0d0d0; font-weight: 400; color: #444; padding: 0; }
.ptable th.hl, .rtable th.hl { background: #7ab6f8; color: #fff; }
.ptable td { height: 21px; border: 1px solid #d6d6d6; padding: 0 3px; white-space: nowrap; color: #222; font-size: 12px; overflow: hidden; }
.ptable td.no { background: #f0f0f0; text-align: center; font-size: 13px; color: #333; padding: 0; }
.ptable td.no.act { background: #7ab6f8; color: #fff; font-weight: 700; }
.ptable td.link { color: #2a6fe0; }
.ptable td.edit { border: 2px solid #808080; }
.ptable td.grey { background: #e8e8e8; }
.ptable td.ck { text-align: center; padding: 0; }
.ptable small { font-size: 11px; vertical-align: 2px; margin: 0 0 0 2px; }
.plus { display: inline-block; width: 12px; height: 12px; border: 1px solid #999; border-radius: 2px; position: relative; margin: 0 5px 0 -1px; vertical-align: -2px; }
.plus::before { content: ""; position: absolute; left: 2px; top: 4px; width: 6px; height: 1.5px; background: #333; }
.plus::after { content: ""; position: absolute; left: 4px; top: 2px; width: 1.5px; height: 6px; background: #333; }
.mark { position: absolute; left: 74px; top: 101px; pointer-events: none; }

.cb { display: block; margin: 0 auto; width: 14px; height: 14px; border: 1px solid #999; border-radius: 3px; background: #fff; position: relative; }
.cb.dis { background: #eee; border-color: #ccc; }
.cb.pt { border-color: #4d94ee; background: #a3c9fb; box-shadow: inset 0 0 0 1px #fff; }
.cb.ok { background: #5ba3fb; border-color: #5ba3fb; }
.cb.ok::after { content: ""; position: absolute; left: 2px; top: 2px; width: 8px; height: 4px; border-left: 2px solid #fff; border-bottom: 2px solid #fff; transform: rotate(-45deg); }

.split { width: 4px; background: #d8dade; position: relative; flex: none; }
.split::after { content: ""; position: absolute; left: 0; top: 373px; width: 100%; height: 99px; background: #5c6570; }
.canvas { width: 1139px; background: #000; position: relative; overflow: hidden; flex: none; }
.cad { display: block; }
.axis-no { font: 14px "Liberation Sans", sans-serif; fill: #fff; text-anchor: middle; }
.big-t { font: 63px "Open Sans", sans-serif; fill: #fff; }
.big-t.mag { fill: #d030d0; }
.lt { font: 100 113px "Inter", sans-serif; fill: #a0a01c; letter-spacing: 24px; }
.ax { font: 17px "Liberation Sans", sans-serif; text-anchor: middle; }
.ax.g { fill: #00ee00; } .ax.r { fill: #f00000; }
.viewbar { position: absolute; right: 1px; top: 1px; width: 33px; height: 227px; background: #8f9298; }
.viewbar svg { display: block; }
.vb3 { font: 8px "Liberation Sans", sans-serif; fill: #111; }

.right { width: 277px; border-right: 0; margin-left: -1px; flex: 1 0 277px; }
.rtabs { height: 27px; display: flex; align-items: flex-end; background: #f0f0f0; padding-left: 2px; gap: 3px; flex: none; border-bottom: 1px solid #cfcfcf; }
.rtab { width: 75px; height: 22px; background: #e0e0e0; color: #777; text-align: center; line-height: 22px; border-radius: 3px 3px 0 0; }
.rtab.on { height: 24px; background: #fff; color: #2f8fe8; line-height: 24px; border: 1px solid #d8d8d8; border-bottom: 0; }
.rbox { margin: 0 2px; height: 741px; border: 1px solid #c8c8c8; overflow: hidden; position: relative; padding-top: 2px; }
.rtable { width: 257px; border-collapse: collapse; table-layout: fixed; }
.r-name { width: 130px; } .r-a { width: 64px; } .r-b { width: 63px; }
.rtable th { height: 21px; background: #f0f0f0; border: 1px solid #d0d0d0; font-weight: 400; color: #444; padding: 0; }
.rtable td { height: 21px; border: 1px solid #d8d8d8; text-align: center; padding: 0; position: relative; }
.rtable td.cur { outline: 2px solid #808080; outline-offset: -2px; }
.rtable td.n { text-align: left; white-space: nowrap; color: #111; }
.n.l0 { padding-left: 3px; } .n.l1 { padding-left: 13px; } .n.l2 { padding-left: 40px; }
.mb { display: inline-block; width: 12px; height: 12px; border: 1px solid #999; border-radius: 2px; position: relative; margin-right: 5px; vertical-align: -2px; background: #fff; }
.n.l0 .mb { margin-right: 6px; }
.mb::before { content: ""; position: absolute; left: 2px; top: 4px; width: 6px; height: 1.5px; background: #333; }
.n.l1::before, .n.l2::before { content: ""; position: absolute; left: 9px; top: 10px; width: 4px; border-top: 1px solid #ddd; }
.n.l2::before { left: 18px; width: 17px; }
.n.l2::after { content: ""; position: absolute; left: 18px; top: 0; height: 100%; border-left: 1px solid #ddd; }
.n.l2.e::after { height: 11px; }
.rscroll { position: absolute; left: 260px; top: 14px; width: 8px; height: 237px; border-radius: 4px; background: #c8c8c8; }
.rfoot { flex: 1; display: flex; justify-content: flex-end; align-items: flex-start; padding: 7px 8px 0 0; }
.restore { width: 90px; height: 24px; border: 1px solid #d8d8d8; border-radius: 2px; color: #555; text-align: center; line-height: 22px; }

/* status */
.status { height: 30px; display: flex; align-items: center; background: #dcdde0; white-space: nowrap; color: #444; }
.st { font-size: 12px; }
.s1 { margin-left: 2px; width: 263px; letter-spacing: .6px; word-spacing: 2px; }
.s2 { width: 83px; } .s3 { width: 133px; letter-spacing: .7px; } .s4 { width: 103px; }
.s5 { width: 103px; }
.sb { height: 25px; border: 1px solid #a8a8a8; background: #d0d1d4; display: flex; align-items: center; justify-content: center; margin-right: 4px; flex: none; }
.sb .ar { margin-left: 3px; }
.sb.on { background: #fff; border-color: #4a9ef0; }
.w25 { width: 25px; } .w36 { width: 36px; } .w73 { width: 73px; } .w61 { width: 61px; }
.sb.txt { color: #333; }
.msg { margin-left: 2px; color: #333; }
.fps { margin-left: auto; margin-right: 30px; margin-top: 2px; color: #555; line-height: 12px; }

.taskbar { height: 8px; flex: none; border-top: 1px solid #2b2f35; background: #8497ae; display: flex; overflow: hidden; position: relative; }
.start { width: 59px; position: relative; }
.start i { position: absolute; left: 10px; top: 0; width: 32px; height: 20px; border-radius: 50%; border: 1px solid #c8d4e0; background: #5e80a8; }
.tk { width: 158px; margin-left: 1px; margin-right: 3px; background: linear-gradient(#e8edf2, #cdd5dd); border-left: 1px solid #333; position: relative; }
.tk i { position: absolute; top: 1px; left: 12px; }
.tk-a { width: 18px; height: 8px; background: #f1e0a0; }
.tk-b { width: 30px; height: 8px; background: #2e6cb4; border-radius: 3px 3px 0 0; }
.tk-c { width: 30px; height: 8px; background: #dcecf8; border-radius: 3px 3px 0 0; }
.clock { position: absolute; left: 1832px; top: -1px; color: #fff; font-size: 12px; line-height: 16px; }
.showd { position: absolute; right: 0; top: 0; width: 14px; height: 8px; background: #b4bcc6; border-left: 1px solid #555; }

/* net overlay */
.net { position: absolute; left: 1795px; top: 973px; width: 122px; height: 60px; }
.pill { position: absolute; left: 0; top: 10px; width: 92px; height: 42px; border-radius: 21px; background: rgba(44, 50, 60, .93); color: #eee; }
.nr { height: 21px; display: flex; align-items: center; padding-left: 10px; }
.nr b { width: 22px; font: bold 11px "Liberation Sans", sans-serif; }
.nr .up { color: #4aa8f0; } .nr .dn { color: #30b040; }
.nr span { margin-left: 1px; font: 12px "Liberation Sans", sans-serif; }
.nr small { font: 9px "Liberation Sans", sans-serif; color: #aab; margin-left: 1px; }
.gauge { position: absolute; left: 59px; top: 0; }
.gauge svg { display: block; }
.g-n { font: 100 26px "Inter", sans-serif; fill: #fff; text-anchor: middle; }
.g-p { font: 10px "Liberation Sans", sans-serif; fill: #fff; text-anchor: middle; }
```
